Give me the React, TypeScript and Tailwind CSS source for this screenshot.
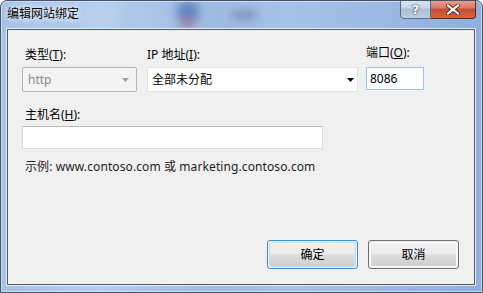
import React from "react";

const F = { fontFamily: '"Noto Sans", "Noto Sans CJK SC", sans-serif' } as React.CSSProperties;

const btnFace =
  "w-full h-full rounded-[2px] border bg-[linear-gradient(180deg,#f2f2f2_0%,#ebebeb_48%,#dddddd_52%,#cfcfcf_100%)] flex items-center justify-center";

export default function App() {
  return (
    <div className="w-[483px] h-[293px] bg-white" style={F}>
      <div className="relative w-[483px] h-[293px] rounded-t-[7px] border border-[#46546a] bg-[linear-gradient(90deg,#a6c1e6_0%,#b3cdee_20%,#9fbbe2_45%,#a7c2e8_60%,#8fafdc_100%)] overflow-hidden flex flex-col">
        {/* glass blobs */}
        <div className="absolute left-[80px] top-[2px] w-[40px] h-[24px] rounded-full bg-[#bcd4ee] blur-[6px] opacity-70" />
        <div className="absolute left-[175px] top-[0px] w-[24px] h-[20px] rounded-full bg-[#3a5ea8] blur-[5px] opacity-60" />
        <div className="absolute left-[178px] top-[16px] w-[16px] h-[12px] rounded-full bg-[#a25a7a] blur-[4px] opacity-50" />
        <div className="absolute left-[230px] top-[9px] w-[26px] h-[10px] rounded-full bg-[#5b7396] blur-[4px] opacity-50" />
        <div className="absolute inset-0 rounded-t-[6px] border border-[#e4eefa]/60 pointer-events-none" />

        {/* title bar */}
        <div className="relative h-[27px] flex items-start justify-between pl-[6px] pr-[6px]">
          <div className="mt-[5px] text-[12px] leading-[16px] text-black [text-shadow:0_0_6px_#ffffff,0_0_6px_#ffffff]">
            编辑网站绑定
          </div>
          <div className="flex h-[20px] mt-[-2px]">
            <div className="w-[31px] h-[20px] rounded-bl-[4px] border border-[#5a6d85] bg-[linear-gradient(180deg,#dbe6f2_0%,#c5d5e7_45%,#a9bdd6_50%,#bcd0e6_100%)] flex items-center justify-center">
              <span className="text-[13px] font-bold leading-none text-white [text-shadow:0_0_1px_#2b3a4f,0_0_2px_#2b3a4f]" style={{ fontFamily: '"DejaVu Sans", sans-serif' }}>?</span>
            </div>
            <div className="w-[45px] h-[20px] rounded-br-[4px] border border-l-0 border-[#5a2a22] bg-[linear-gradient(180deg,#e8a393_0%,#d67a66_45%,#c44a32_50%,#d9643f_100%)] flex items-center justify-center">
              <svg width="14" height="11" viewBox="0 0 14 11">
                <path d="M2 1.5 L12 9.5 M12 1.5 L2 9.5" stroke="#5a2018" strokeWidth="4" strokeLinecap="square" />
                <path d="M2 1.5 L12 9.5 M12 1.5 L2 9.5" stroke="#ffffff" strokeWidth="2.2" strokeLinecap="square" />
              </svg>
            </div>
          </div>
        </div>

        {/* content */}
        <div className="relative ml-[5px] w-[470px] h-[258px] border border-[#e6eef8]">
          <div className="w-full h-full border border-[#4c5a6a] bg-[#f0f0f0] flex flex-col pl-[14px] pt-[14px] pr-[15px] pb-[15px] text-[12px] text-black">
            {/* row 1 */}
            <div className="flex">
              <div className="w-[125px] flex flex-col">
                <div className="h-[18px] leading-[18px] ml-[3px] mt-[2px]">类型(<u>T</u>):</div>
                <div className="mt-[3px] w-[115px] h-[25px] rounded-[2px] border border-[#b6b6b6] bg-[#f4f4f4] flex items-center justify-between pl-[5px] pr-[7px] text-[#8a8a8a]">
                  <span>http</span>
                  <svg width="7" height="4" viewBox="0 0 7 4"><path d="M0 0 H7 L3.5 4 Z" fill="#a0a0a0" /></svg>
                </div>
              </div>
              <div className="w-[219px] flex flex-col">
                <div className="h-[18px] leading-[18px] mt-[2px]">IP 地址(<u>I</u>):</div>
                <div className="mt-[3px] w-[211px] h-[25px] border border-[#e3e3e3] bg-white flex items-center justify-between pl-[4px] pr-[3px]">
                  <span>全部未分配</span>
                  <svg width="7" height="4" viewBox="0 0 7 4"><path d="M0 0 H7 L3.5 4 Z" fill="#000000" /></svg>
                </div>
              </div>
              <div className="flex flex-col">
                <div className="h-[18px] leading-[18px]">端口(<u>O</u>):</div>
                <div className="mt-[5px] w-[58px] h-[23px] border border-[#a6c3de] bg-white flex items-center pl-[3px]">8086</div>
              </div>
            </div>

            {/* row 2 */}
            <div className="mt-[14px] flex flex-col">
              <div className="h-[18px] leading-[18px] ml-[3px]">主机名(<u>H</u>):</div>
              <div className="mt-[2px] w-[301px] h-[23px] border border-[#d5dbe3] border-t-[#b8bcc2] bg-white" />
              <div className="mt-[10px] ml-[3px] leading-[16px] text-[#1e1e1e] tracking-[0.1px]">示例: www.contoso.com 或 marketing.contoso.com</div>
            </div>

            {/* buttons */}
            <div className="mt-auto flex justify-end gap-[10px]">
              <div className="w-[91px] h-[29px] rounded-[3px] border border-[#3c8fd0] p-[1px] bg-[#f0f0f0]">
                <div className={btnFace + " border-[#bfe3f7]"}>确定</div>
              </div>
              <div className="w-[91px] h-[29px] rounded-[3px] border border-[#707070] p-[1px] bg-[#f0f0f0]">
                <div className={btnFace + " border-[#fcfcfc]"}>取消</div>
              </div>
            </div>
          </div>
        </div>
      </div>
    </div>
  );
}
